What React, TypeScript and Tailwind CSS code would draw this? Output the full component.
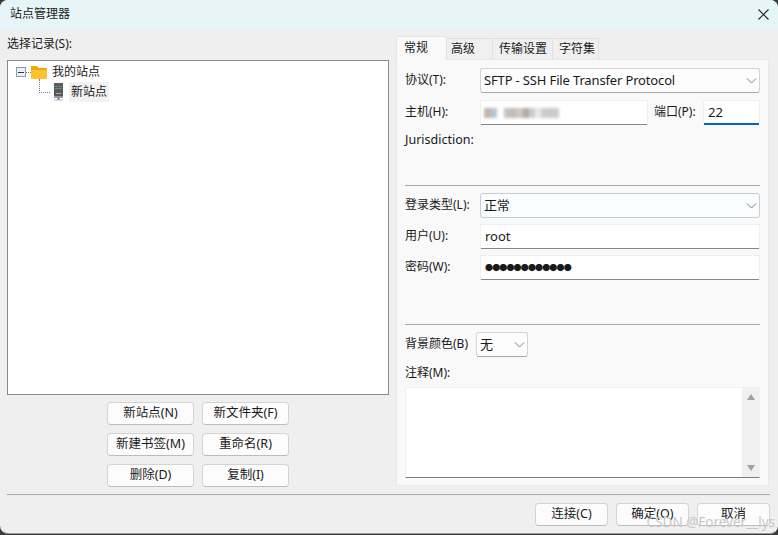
import React from "react";

const font = { fontFamily: '"Noto Sans", "Noto Sans CJK SC", sans-serif' };

function Chevron() {
  return (
    <svg width="11" height="6" viewBox="0 0 11 6" fill="none" stroke="#707070" strokeWidth="0.9">
      <path d="M1 .5l4.5 4.5L10 .5" />
    </svg>
  );
}

function Btn({ children, w }: { children: React.ReactNode; w: string }) {
  return (
    <div className={`${w} h-[23px] shrink-0 pb-[1px] flex items-center justify-center rounded-[4px] border border-[#d4d4d4] border-b-[#bcbcbc] bg-[#fcfcfc] text-[12.5px] text-[#1a1a1a]`}>
      {children}
    </div>
  );
}

function Label({ children, w = "w-[75px]" }: { children: React.ReactNode; w?: string }) {
  return <div className={`${w} shrink-0 pb-[1px] text-[12px] text-[#1a1a1a] leading-[18px] whitespace-nowrap`}>{children}</div>;
}

function Input({ children, cls = "flex-1", focus = false }: { children?: React.ReactNode; cls?: string; focus?: boolean }) {
  return (
    <div className={`${cls} h-[25px] pb-[1px] flex items-center pl-[4px] bg-white border border-[#f0f0f0] border-b-0 text-[13px] text-[#1a1a1a] ${focus ? "shadow-[inset_0_-2px_0_#0067c0]" : "shadow-[inset_0_-1px_0_#868686]"}`}>
      {children}
    </div>
  );
}

function Select({ children, cls = "flex-1", hover = false }: { children: React.ReactNode; cls?: string; hover?: boolean }) {
  return (
    <div className={`${cls} h-[25px] flex items-center justify-between pl-[3px] pr-[2px] rounded-[3px] border text-[13px] text-[#1a1a1a] ${hover ? "bg-[#fafcfe] border-[#c2d0de]" : "bg-[#fdfdfd] border-[#d4d4d4] border-b-[#a8a8a8]"}`}>
      <span className="whitespace-nowrap tracking-[-0.15px]">{children}</span>
      <Chevron />
    </div>
  );
}

function FolderIcon() {
  return (
    <svg width="16" height="14" viewBox="0 0 16 14">
      <path d="M0 2a1 1 0 0 1 1-1h5l1.5 2H15a1 1 0 0 1 1 1v1H0z" fill="#e9a90f" />
      <path d="M0 5h16v8a1 1 0 0 1-1 1H1a1 1 0 0 1-1-1z" fill="#fdc32c" />
    </svg>
  );
}

function ServerIcon() {
  return (
    <svg width="11" height="18" viewBox="0 0 11 18">
      <rect x="1" y="0" width="9" height="13" fill="#5a5a5a" />
      <rect x="2" y="3" width="7" height="1" fill="#4d9a5c" />
      <rect x="2" y="5" width="7" height="1" fill="#808080" />
      <rect x="3" y="10" width="5" height="1" fill="#b0b0b0" />
      <rect x="1" y="13" width="9" height="2" fill="#9a9a9a" />
      <rect x="4.5" y="15" width="2" height="2" fill="#4a78b0" />
      <rect x="1" y="16.5" width="9" height="1" fill="#a8b8c8" />
    </svg>
  );
}

const blurBlocks: [number, string][] = [
  [7, "#c4b4ac"], [6, "#b8c4d0"], [7, "#ffffff"], [6, "#c8c0bc"], [6, "#c0bcb8"], [7, "#cfc8c4"], [6, "#b8a8a4"], [6, "#c8ccd0"], [6, "#e8e8e8"], [6, "#d0cccc"], [6, "#c8c8d0"], [6, "#d0cccc"],
];

export default function App() {
  return (
    <div style={font} className="relative w-[778px] h-[535px] overflow-hidden bg-[#3a3a3a]">
      <div className="w-full h-[534px] flex flex-col rounded-[8px] overflow-hidden bg-[#efefef] border-b border-[#9a9a9a]">
        <div className="h-[30px] shrink-0 flex items-center justify-between pl-[10px] pr-[9px] pb-[2px] bg-[#e8f5f8]">
          <span className="text-[12px] text-[#1a1a1a] pb-[1px]">站点管理器</span>
          <svg width="11" height="11" viewBox="0 0 11 11" stroke="#222" strokeWidth="1.1">
            <path d="M.5.5l10 10M10.5.5l-10 10" />
          </svg>
        </div>

        <div className="flex-1 flex flex-col px-[7px]">
          <div className="h-[465px] flex gap-[7px] border-b border-[#a8a8a8] pb-[6px] w-[763px]">
            {/* left */}
            <div className="w-[382px] shrink-0 flex flex-col">
              <div className="h-[30px] shrink-0 flex items-center pb-[2px] text-[12px] text-[#1a1a1a]">选择记录(S):</div>
              <div className="h-[335px] shrink-0 bg-white border border-[#8a8a8a] pl-[8px] pt-[2px]">
                <div className="flex items-center h-[18px]">
                  <div className="w-[10px] h-[10px] border border-[#8a9aa8] bg-[#eef1f4] flex items-center justify-center">
                    <div className="w-[6px] h-px bg-[#1a3a6a]" />
                  </div>
                  <div className="w-[5px] border-t border-dotted border-[#777]" />
                  <FolderIcon />
                  <span className="ml-[5px] text-[12px] text-[#1a1a1a]">我的站点</span>
                </div>
                <div className="flex items-center h-[20px] ml-[23px] mt-[1px]">
                  <div className="w-[11px] h-[14px] -mt-[12px] border-l border-b border-dotted border-[#777]" />
                  <div className="ml-[3px] flex"><ServerIcon /></div>
                  <span className="ml-[5px] px-[2px] bg-[#f2f2f2] text-[12px] leading-[20px] text-[#1a1a1a]">新站点</span>
                </div>
              </div>
              <div className="mt-[7px] flex flex-col gap-[8px] items-center">
                <div className="flex gap-[8px]"><Btn w="w-[87px]">新站点(N)</Btn><Btn w="w-[87px]">新文件夹(F)</Btn></div>
                <div className="flex gap-[8px]"><Btn w="w-[87px]">新建书签(M)</Btn><Btn w="w-[87px]">重命名(R)</Btn></div>
                <div className="flex gap-[8px]"><Btn w="w-[87px]">删除(D)</Btn><Btn w="w-[87px]">复制(I)</Btn></div>
              </div>
            </div>

            {/* right */}
            <div className="w-[373px] shrink-0 flex flex-col pt-[7px]">
              <div className="flex items-end h-[23px] shrink-0 text-[12px] text-[#1a1a1a]">
                <div className="w-[51px] h-[24px] pl-[7px] pt-[2px] bg-[#f9f9f9] border border-[#e4e4e4] border-b-0 rounded-t-[2px] relative z-10">常规</div>
                <div className="w-[46px] h-[22px] pl-[4px] pt-[1px] border border-[#e0e0e0] border-b-0 border-l-0 bg-[#f0f0f0]">高级</div>
                <div className="w-[60px] h-[22px] pl-[6px] pt-[1px] border border-[#e0e0e0] border-b-0 border-l-0 bg-[#f0f0f0] whitespace-nowrap">传输设置</div>
                <div className="w-[46px] h-[22px] pl-[6px] pt-[1px] border border-[#e0e0e0] border-b-0 border-l-0 bg-[#f0f0f0]">字符集</div>
              </div>
              <div className="h-[427px] shrink-0 -mt-px bg-[#f9f9f9] border border-[#e8e8e8] px-[8px] pt-[8px] flex flex-col">
                <div className="flex items-center"><Label>协议(T):</Label><Select>SFTP - SSH File Transfer Protocol</Select></div>
                <div className="flex items-center mt-[7px]">
                  <Label>主机(H):</Label>
                  <Input cls="w-[168px] shrink-0">
                    <div className="flex h-[10px] ml-[-1px] blur-[1.5px]">
                      {blurBlocks.map(([w, c], i) => (
                        <div key={i} style={{ width: w, background: c }} className="h-full" />
                      ))}
                    </div>
                  </Input>
                  <div className="ml-[6px] w-[49px]"><Label w="w-[49px]">端口(P):</Label></div>
                  <Input cls="w-[57px] shrink-0" focus>22</Input>
                </div>
                <div className="mt-[6px] text-[12.5px] leading-[18px] text-[#1a1a1a]">Jurisdiction:</div>
                <div className="mt-[36px] border-t border-[#a8a8a8]" />
                <div className="flex items-center mt-[7px]"><Label>登录类型(L):</Label><Select hover>正常</Select></div>
                <div className="flex items-center mt-[6px]"><Label>用户(U):</Label><Input>root</Input></div>
                <div className="flex items-center mt-[6px]">
                  <Label>密码(W):</Label>
                  <Input>
                    <span className="text-[8px] tracking-[-0.85px]">●●●●●●●●●●●●</span>
                  </Input>
                </div>
                <div className="mt-[44px] border-t border-[#a8a8a8]" />
                <div className="flex items-center mt-[7px]">
                  <Label w="w-[71px]">背景颜色(B)</Label>
                  <Select cls="w-[52px]">无</Select>
                </div>
                <div className="mt-[7px] text-[12px] leading-[18px] text-[#1a1a1a]">注释(M):</div>
                <div className="mt-[5px] h-[91px] flex justify-end bg-white border border-[#f0f0f0] border-b-[#7e7e7e]">
                  <div className="w-[17px] bg-[#f0f0f0] flex flex-col justify-between items-center py-[6px]">
                    <div className="w-0 h-0 border-x-[4.5px] border-x-transparent border-b-[6px] border-b-[#a0a0a0]" />
                    <div className="w-0 h-0 border-x-[4.5px] border-x-transparent border-t-[6px] border-t-[#a0a0a0]" />
                  </div>
                </div>
              </div>
            </div>
          </div>

          <div className="flex justify-end gap-[8px] pt-[8px] w-[763px]">
            <Btn w="w-[73px]">连接(C)</Btn>
            <Btn w="w-[73px]">确定(O)</Btn>
            <Btn w="w-[73px]">取消</Btn>
          </div>
        </div>
      </div>
      <div className="absolute right-[3px] top-[512px] text-[13.5px] text-[#c8c8c8] whitespace-nowrap">CSDN @Forever__lys</div>
    </div>
  );
}
